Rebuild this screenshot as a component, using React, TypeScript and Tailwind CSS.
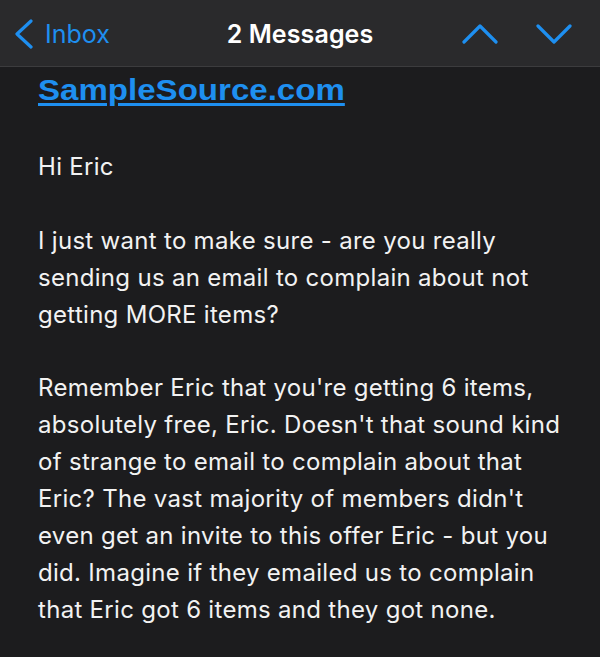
import React from "react";

const lines1 = [
  "I just want to make sure - are you really",
  "sending us an email to complain about not",
  "getting MORE items?",
];
const lines2 = [
  "Remember Eric that you're getting 6 items,",
  "absolutely free, Eric. Doesn't that sound kind",
  "of strange to email to complain about that",
  "Eric? The vast majority of members didn't",
  "even get an invite to this offer Eric - but you",
  "did. Imagine if they emailed us to complain",
  "that Eric got 6 items and they got none.",
];

export default function App() {
  return (
    <div className="w-[600px] h-[657px] overflow-hidden bg-[#1c1c1e] flex flex-col" style={{ fontFamily: "Inter, 'Noto Sans', sans-serif" }}>
      <div className="h-[67px] shrink-0 bg-[#2a2a2c] border-b border-[#3c3c3e] flex items-center relative pt-[2px]">
        <div className="flex items-center pl-[14px] text-[#1e8ff0]">
          <svg width="20" height="30" viewBox="0 0 20 30" fill="none">
            <path d="M17 2 L3 15 L17 28" stroke="#1e8ff0" strokeWidth="3.2" strokeLinecap="round" strokeLinejoin="round" />
          </svg>
          <span className="ml-[11px] text-[25px] leading-none tracking-[0px]">Inbox</span>
        </div>
        <div className="absolute left-0 right-0 top-0 h-full pt-[2px] flex items-center justify-center pointer-events-none">
          <span className="text-white text-[25px] font-semibold leading-none tracking-[0.1px]">2 Messages</span>
        </div>
        <div className="ml-auto flex items-center gap-[38px] pr-[28px]">
          <svg width="36" height="20" viewBox="0 0 36 20" fill="none">
            <path d="M2 18 L18 2 L34 18" stroke="#1e8ff0" strokeWidth="3.2" strokeLinecap="round" strokeLinejoin="round" />
          </svg>
          <svg width="36" height="20" viewBox="0 0 36 20" fill="none">
            <path d="M2 2 L18 18 L34 2" stroke="#1e8ff0" strokeWidth="3.2" strokeLinecap="round" strokeLinejoin="round" />
          </svg>
        </div>
      </div>
      <div className="pl-[38px] text-[#f2f2f2] text-[24px] leading-[36.9px] tracking-[0.3px]">
        <div className="mt-[5px] h-[36px] flex items-center">
          <span
            className="inline-block origin-left scale-x-[1.14] text-[#1e8ff0] font-bold text-[29px] leading-none tracking-[0px] underline decoration-[3px] underline-offset-[3px]"
            style={{ fontFamily: "'Liberation Sans', Arial, sans-serif" }}
          >
            SampleSource.com
          </span>
        </div>
        <div className="mt-[41px]">Hi Eric</div>
        <div className="mt-[36.9px]">
          {lines1.map((l) => (
            <div key={l} className="whitespace-nowrap">{l}</div>
          ))}
        </div>
        <div className="mt-[36.9px]">
          {lines2.map((l) => (
            <div key={l} className="whitespace-nowrap">{l}</div>
          ))}
        </div>
      </div>
    </div>
  );
}
